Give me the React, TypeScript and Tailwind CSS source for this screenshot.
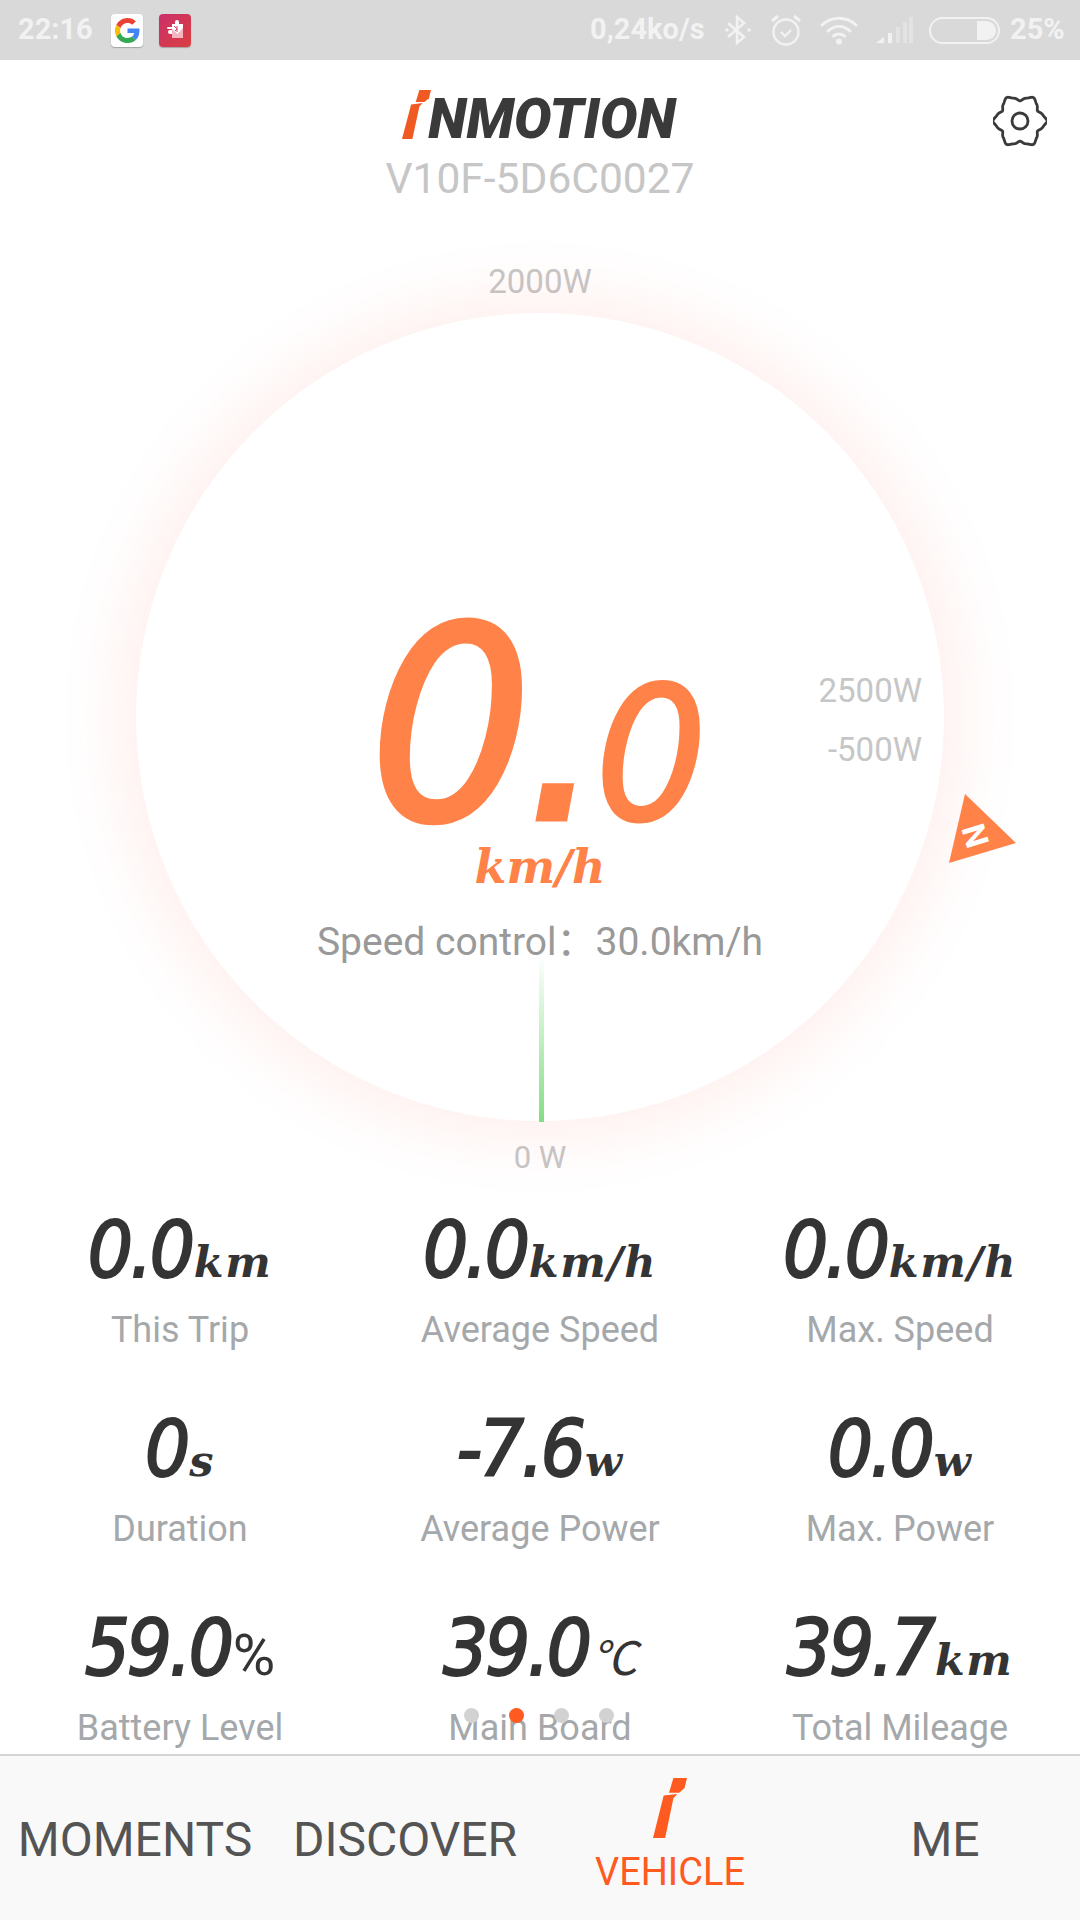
import React from "react";

const roboto = "font-['Roboto','Noto_Sans_CJK_SC',sans-serif]";
const digit = "font-['DejaVu_Sans_Condensed',sans-serif] italic font-normal";
const slab = "font-['DejaVu_Serif',serif] italic font-bold";

function gearPath() {
  const pts: string[] = [];
  for (let i = 0; i < 144; i++) {
    const t = (i / 144) * Math.PI * 2;
    const r = 23.6 + 2.9 * Math.cos(6 * t) + 0.5 * Math.cos(18 * t);
    pts.push(`${(27 + r * Math.cos(t)).toFixed(2)},${(27 + r * Math.sin(t)).toFixed(2)}`);
  }
  return `M${pts.join("L")}Z`;
}

function Mark({ className, color }: { className: string; color: string }) {
  return (
    <svg viewBox="0 0 70 143" preserveAspectRatio="none" className={className} fill={color}>
      <polygon points="0,143 25,143 42,48 50,38 22,42" />
      <polygon points="42,0 70,0 65,24 54,35 33,35" />
    </svg>
  );
}

function Stat({ value, unit, label, unitClass }: { value: string; unit: string; label: string; unitClass?: string }) {
  return (
    <div className="flex flex-col items-center h-[144px]">
      <div className="flex items-baseline h-[84px]">
        <span className={`${digit} text-[79px] leading-[84px] tracking-[-3px] text-[#343434] [-webkit-text-stroke:2px_#343434]`}>{value}</span>
        <span className={`ml-[2px] leading-[84px] text-[#343434] ${unitClass ?? `${slab} text-[43px] tracking-[1.5px]`}`}>{unit}</span>
      </div>
      <div className={`${roboto} mt-[16px] text-[36px] leading-[44px] text-[#a5a8aa]`}>{label}</div>
    </div>
  );
}

const stats = [
  { value: "0.0", unit: "km", label: "This Trip" },
  { value: "0.0", unit: "km/h", label: "Average Speed" },
  { value: "0.0", unit: "km/h", label: "Max. Speed" },
  { value: "0", unit: "s", label: "Duration" },
  { value: "-7.6", unit: "w", label: "Average Power" },
  { value: "0.0", unit: "w", label: "Max. Power" },
  { value: "59.0", unit: "%", label: "Battery Level", unitClass: `${roboto} font-normal text-[58px]` },
  { value: "39.0", unit: "℃", label: "Main Board", unitClass: `${roboto} font-normal italic text-[46px]` },
  { value: "39.7", unit: "km", label: "Total Mileage" },
];

export default function App() {
  return (
    <div className={`w-[1080px] h-[1920px] bg-white flex flex-col overflow-hidden ${roboto}`}>
      {/* Status bar */}
      <div className="h-[60px] bg-[#d9d9d9] flex items-center text-[#f2f2f2] font-bold text-[29px] shrink-0">
        <span className="ml-[18px] w-[75px]">22:16</span>
        <div className="ml-[18px] w-[32px] h-[33px] bg-white rounded-[4px] shadow-[0_1px_1px_rgba(0,0,0,0.25)] flex items-center justify-center">
          <svg viewBox="0 0 48 48" className="w-[25px] h-[25px]">
            <path fill="#EA4335" d="M24 9.5c3.5 0 6.7 1.2 9.2 3.6l6.9-6.9C35.9 2.4 30.5 0 24 0 14.6 0 6.5 5.4 2.6 13.2l8 6.2C12.4 13.700 17.7 9.5 24 9.5z" />
            <path fill="#4285F4" d="M47 24.500c0-1.600-.1-3.100-.4-4.500H24v9h12.900c-.6 3-2.200 5.500-4.800 7.200l7.700 6C44.400 38.500 47 32 47 24.500z" />
            <path fill="#FBBC05" d="M10.600 28.600C10.100 27.200 9.800 25.600 9.800 24s.3-3.200.8-4.600l-8-6.200C.9 16.400 0 20.100 0 24s.9 7.600 2.600 10.800l8-6.200z" />
            <path fill="#34A853" d="M24 48c6.500 0 11.900-2.100 15.900-5.800l-7.700-6c-2.100 1.400-4.900 2.300-8.200 2.300-6.300 0-11.600-4.200-13.400-9.900l-8 6.200C6.500 42.600 14.600 48 24 48z" />
          </svg>
        </div>
        <div className="ml-[16px] w-[32px] h-[33px] rounded-[4px] bg-[linear-gradient(135deg,#cb2f6c,#d93f3f)] shadow-[0_1px_1px_rgba(0,0,0,0.25)] flex items-center justify-center">
          <svg viewBox="0 0 32 32" className="w-[32px] h-[32px]">
            <path d="M9 13h4v-3h3V8a2 2 0 0 1 4 0v2h4v14H13v-4h-2a2 2 0 0 1 0-4h2v-1H9a1 1 0 0 1 0-2z" fill="#fff" />
            <path d="M13 24V15l5.500 5 5.500-6v10z" fill="#f4b6bf" />
            <path d="M15 12l3 3-2 2M18 12v6" stroke="#d9406a" strokeWidth="1" fill="none" />
          </svg>
        </div>
        <span className="ml-[399px] w-[116px] whitespace-nowrap">0,24ko/s</span>
        <svg viewBox="0 0 28 32" className="ml-[18px] w-[28px] h-[32px]" fill="none" stroke="#f2f2f2" strokeWidth="2.600">
          <path d="M4 9l16 14-7 6V3l7 6L4 23" />
          <circle cx="3" cy="16" r="1.800" fill="#f2f2f2" stroke="none" />
          <circle cx="25" cy="16" r="1.800" fill="#f2f2f2" stroke="none" />
        </svg>
        <svg viewBox="0 0 32 34" className="ml-[18px] w-[32px] h-[34px]" fill="none" stroke="#f2f2f2" strokeWidth="2.400">
          <circle cx="16" cy="19" r="12.500" />
          <path d="M11 19l4 4 6-6" />
          <path d="M2 8l6-5M30 8l-6-5" strokeWidth="3" />
        </svg>
        <svg viewBox="0 0 38 30" className="ml-[18px] w-[38px] h-[30px]" fill="none" stroke="#f2f2f2" strokeWidth="3" strokeLinecap="round">
          <path d="M2 10c10-9 24-9 34 0" />
          <path d="M8 16c7-6 15-6 22 0" />
          <path d="M13.500 21c4-3 7-3 11 0" />
          <circle cx="19" cy="26.500" r="3" fill="#f2f2f2" stroke="none" />
        </svg>
        <svg viewBox="0 0 37 26" className="ml-[18px] w-[37px] h-[26px]" fill="#f2f2f2">
          <polygon points="0,26 8,26 8,20" />
          <rect x="12" y="16" width="4" height="10" />
          <rect x="20" y="10" width="4" height="16" opacity="0.4" />
          <rect x="27" y="5" width="4" height="21" opacity="0.4" />
          <rect x="33" y="0" width="4" height="26" opacity="0.4" />
        </svg>
        <div className="ml-[16px] w-[71px] h-[27px] rounded-[14px] border-2 border-[#f2f2f2] flex justify-end p-[2px]">
          <div className="w-[19px] h-full bg-[#f2f2f2] rounded-r-[10px]" />
        </div>
        <span className="ml-[10px]">25%</span>
      </div>

      {/* Header */}
      <div className="relative h-[150px] shrink-0 flex flex-col items-center">
        <div className="flex items-end mt-[30px] h-[49px] ml-[-2px]">
          <Mark className="w-[29px] h-[49px]" color="#f05a22" />
          <span className="italic font-black text-[56px] leading-[40px] text-[#3a3a3a] h-[40px] ml-[-3px]">NMOTION</span>
        </div>
        <div className="mt-[16px] text-[42.5px] leading-[48px] text-[#c6c6c6]">V10F-5D6C0027</div>
        <svg viewBox="0 0 54 54" className="absolute left-[993px] top-[34px] w-[54px] h-[54px]" fill="none" stroke="#3a3a3a" strokeWidth="2.800" strokeLinejoin="round">
          <path d={gearPath()} />
          <circle cx="27" cy="27" r="8" />
        </svg>
      </div>

      {/* Gauge */}
      <div className="h-[998px] shrink-0 flex flex-col items-center">
        <div className="mt-[52px] h-[40px] leading-[40px] text-[33px] text-[#c6c6c6]">2000W</div>
        <div className="relative mt-[11px] w-[808px] h-[808px] rounded-full bg-white shadow-[0_0_60px_20px_rgba(250,120,100,0.11)] flex flex-col items-center shrink-0">
          <div className={`flex items-baseline mt-[308px] h-[210px] text-[#ff8248] ${digit}`}>
            <span className="text-[268px] leading-[210px] tracking-[-8px] [-webkit-text-stroke:5px_#ff8248] [transform:scaleX(1.06)]">0.</span>
            <span className="text-[186px] leading-[210px] ml-[8px] [-webkit-text-stroke:3px_#ff8248] [transform:scaleX(1.05)]">0</span>
          </div>
          <div className={`${slab} mt-[8px] text-[46px] leading-[56px] text-[#ff8248]`}>km/h</div>
          <div className="mt-[23px] text-[39px] leading-[48px] text-[#999999] whitespace-nowrap">Speed control：30.0km/h</div>

          <div className="absolute right-[22px] top-[358px] flex flex-col items-end text-[33px] leading-[40px] text-[#c6c6c6] gap-[19px]">
            <span>2500W</span>
            <span>-500W</span>
          </div>
          <div className="absolute left-[403px] top-[642px] w-[5px] h-[167px] bg-[linear-gradient(to_bottom,rgba(130,225,130,0),#84dd84)]" />
          <svg viewBox="0 0 70 72" className="absolute left-[813px] top-[481px] w-[70px] h-[72px] overflow-visible">
            <polygon points="16,0 67,49 0,69" fill="#ff8248" />
            <text x="0" y="0" transform="translate(29,41) rotate(-107)" fontSize="32" fontWeight="700" fill="#fff" textAnchor="middle" dominantBaseline="middle" fontFamily="Roboto">N</text>
          </svg>
        </div>
        <div className="mt-[17px] h-[40px] leading-[40px] text-[31px] text-[#c6c6c6]">0 W</div>
      </div>

      {/* Stats */}
      <div className="relative flex-1 min-h-0">
        <div className="grid grid-cols-3 gap-y-[55px]">
          {stats.map((s) => (
            <Stat key={s.label} {...s} />
          ))}
        </div>
        <div className="absolute left-[464px] top-[500px] flex gap-[30px]">
          <span className="w-[15px] h-[15px] rounded-full bg-[#d2d2d2]" />
          <span className="w-[15px] h-[15px] rounded-full bg-[#ff5a1f]" />
          <span className="w-[15px] h-[15px] rounded-full bg-[#d2d2d2]" />
          <span className="w-[15px] h-[15px] rounded-full bg-[#d2d2d2]" />
        </div>
      </div>

      {/* Bottom navigation */}
      <div className="h-[166px] shrink-0 border-t-2 border-[#d4d4d4] bg-[#f9f9f9] grid grid-cols-4 items-center text-center text-[48px] text-[#545454]">
        <span className="mt-[4px]">MOMENTS</span>
        <span className="mt-[4px]">DISCOVER</span>
        <div className="flex flex-col items-center mt-[-4px] mr-[10px]">
          <Mark className="w-[34px] h-[60px]" color="#ff5a1f" />
          <span className="text-[38px] leading-[44px] mt-[12px] text-[#ff5a1f]">VEHICLE</span>
        </div>
        <span className="mt-[4px]">ME</span>
      </div>
    </div>
  );
}
